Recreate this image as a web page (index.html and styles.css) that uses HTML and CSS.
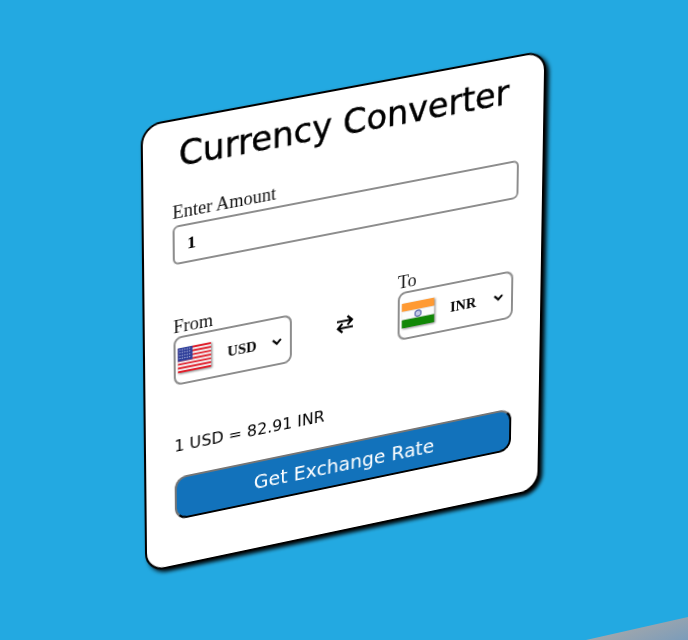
FILE: index.html
```html
<!DOCTYPE html>
<html lang="en">

<head>
    <meta charset="UTF-8">
    <meta name="viewport" content="width=device-width, initial-scale=1.0">
    <title>Currency Converter</title>
    <link rel="stylesheet" href="styles.css">
</head>

<body>
    <div class="wrapper">
        <h2 class="heading">Currency Converter</h2>
        <form class="form">
            <div class="amount">
                <p class="label">Enter Amount</p>
                <input type="text" class="amount-input" value="1">
            </div>
            <div class="drop-list">
                <div class="from">
                    <p class="label">From</p>
                    <div class="select-box">
                        <svg class="flag" viewBox="0 0 34 26">
                            <rect width="34" height="26" fill="#f4f4f6"/>
                            <path d="M0 1h34M0 5h34M0 9h34M0 13h34M0 17h34M0 21h34M0 25h34" stroke="#e0202c" stroke-width="2"/>
                            <rect width="15" height="14" fill="#2f3f9a"/>
                            <path d="M1.5 2h12M1.5 5h12M1.5 8h12M1.5 11h12" stroke="#d6dcf2" stroke-width="1" stroke-dasharray="1 1.5"/>
                        </svg>
                        <select class="currency">
                            <option>USD</option>
                        </select>
                    </div>
                </div>
                <div class="icon">
                    <svg viewBox="0 0 20 20" width="20" height="20">
                        <path d="M2 6.5h15M12.5 2l4.5 4.5-4.5 4.5M18 13.5H3M7.500 9l-4.500 4.500 4.500 4.500" fill="none" stroke="#000" stroke-width="2.200"/>
                    </svg>
                </div>
                <div class="to">
                    <p class="label">To</p>
                    <div class="select-box">
                        <svg class="flag" viewBox="0 0 34 26">
                            <rect width="34" height="8.700" fill="#ff9a33"/>
                            <rect y="8.700" width="34" height="8.700" fill="#fbfbfb"/>
                            <rect y="17.400" width="34" height="8.600" fill="#128807"/>
                            <circle cx="17" cy="13" r="3.200" fill="#c5cbe6" stroke="#3a4a9c"/>
                        </svg>
                        <select class="currency">
                            <option>INR</option>
                        </select>
                    </div>
                </div>
            </div>
            <div class="exchange-rate">1 USD = 82.91 INR</div>
            <button type="button" class="get-rate">Get Exchange Rate</button>
        </form>
    </div>
</body>

</html>
```

FILE: styles.css
```css
* {
    margin: 0;
    padding: 0;
    box-sizing: border-box;
}

html, body {
    height: 640px;
    overflow: hidden;
}

body {
    position: relative;
    background: #23a9e1;
    font-family: "Liberation Serif", serif;
}

/* grey corner at the bottom right */
body::after {
    content: "";
    position: absolute;
    left: 580px;
    top: 610px;
    width: 108px;
    height: 30px;
    background: linear-gradient(160deg, #a6a8aa 40%, #7b9cba);
    clip-path: polygon(6px 30px, 108px 7px, 108px 30px);
}

/* tilted card */
.wrapper {
    width: 400px;
    height: 450px;
    padding: 14px 28px 0;
    background: #fff;
    border: 2px solid #000;
    border-radius: 20px;
    box-shadow: 3px 3px 4px #000;
    transform-origin: 0 0;
    transform: matrix3d(1.0455, -0.18617, 0, 0.000056975,
                        0.02018, 1.03396, 0, 0.00006778,
                        0, 0, 1, 0,
                        140.55, 125.3, 0, 1);
}

.heading {
    font-family: "DejaVu Sans", sans-serif;
    font-size: 33.3px;
    font-weight: 400;
    line-height: 40px;
    text-align: center;
    white-space: nowrap;
    -webkit-text-stroke: 0.4px #000;
}

.form {
    margin-top: 26px;
}

.label {
    font-size: 18px;
    line-height: 20px;
    color: #111;
}

.amount-input {
    display: block;
    width: calc(100% + 4px);
    height: 39px;
    margin-top: 3px;
    padding: 0 12px;
    font-family: "Liberation Serif", serif;
    font-size: 17.6px;
    font-weight: 700;
    border: 2px solid #8d8d8d;
    border-radius: 6px;
    outline: none;
}

.drop-list {
    display: flex;
    justify-content: space-between;
    align-items: center;
    margin-top: 52px;
}

.from, .to {
    width: 117px;
}

.select-box {
    display: flex;
    align-items: center;
    height: 49px;
    padding: 0 5px 0 2px;
    border: 2px solid #8d8d8d;
    border-radius: 8px;
}

.flag {
    flex: none;
    width: 33px;
    height: 25px;
    filter: drop-shadow(1px 1px 1px rgba(0, 0, 0, 0.5));
}

.currency {
    flex: 1;
    min-width: 0;
    padding-left: 12px;
    font-family: "Liberation Serif", serif;
    font-size: 14.4px;
    font-weight: 700;
    color: #000;
    background: none;
    border: none;
    outline: none;
}

.icon {
    display: flex;
    margin-top: 13px;
}

.exchange-rate {
    margin-top: 51px;
    font-family: "DejaVu Sans", sans-serif;
    font-size: 15.8px;
    line-height: 22px;
    white-space: nowrap;
}

.get-rate {
    display: block;
    width: 100%;
    height: 44px;
    margin-top: 20px;
    font-family: "DejaVu Sans", sans-serif;
    font-size: 19px;
    color: #fff;
    background: #1272bb;
    border: 2px solid;
    border-color: #767676 #000 #000 #767676;
    border-radius: 12px;
}
```
